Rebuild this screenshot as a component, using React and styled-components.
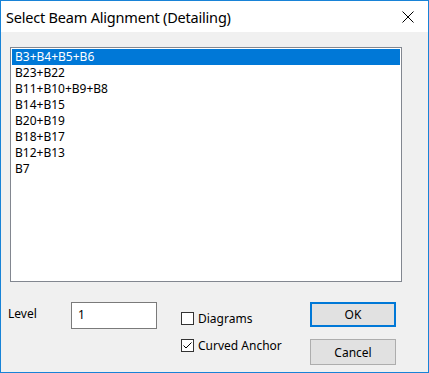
import React from "react";
import styled, {createGlobalStyle} from 'styled-components';

const GlobalStyle = createGlobalStyle`
    html, body {
        margin: 0;
        padding: 0;
        background: #ffffff;
    }
    body {
        font-family: "Segoe UI", "Noto Sans", "Liberation Sans", sans-serif;
    }
`;

const Window = styled.div`
    width: 429px;
    height: 373px;
    box-sizing: border-box;
    border: 1px solid #1883d7;
    background-color: #f0f0f0;
    display: flex;
    flex-direction: column;
`;

const TitleBar = styled.div`
    height: 31px;
    background-color: #ffffff;
    display: flex;
    align-items: center;
    justify-content: space-between;
    padding-left: 5px;
    padding-right: 14px;
`;

const Title = styled.span`
    font-size: 14.5px;
    color: #000000;
    letter-spacing: -0.2px;
`;

const CloseBtn = styled.svg`
    width: 12px;
    height: 12px;
    margin-top: 1px;
`;

const Body = styled.div`
    padding: 15px 0 0 9px;
    display: flex;
    flex-direction: column;
`;

const ListBox = styled.ul`
    list-style: none;
    margin: 0;
    padding: 1px;
    width: 392px;
    height: 235px;
    box-sizing: border-box;
    border: 1px solid #828790;
    background-color: #ffffff;
`;

const ListItem = styled.li`
    height: 16px;
    line-height: 16px;
    padding-left: 3px;
    font-size: 12px;
    color: ${props => props.selected ? '#ffffff' : '#000000'};
    background-color: ${props => props.selected ? '#0078d7' : 'transparent'};
`;

const BottomRow = styled.div`
    display: flex;
    align-items: flex-start;
    padding-top: 20px;
`;

const Label = styled.span`
    width: 63px;
    margin-left: -2px;
    padding-top: 3px;
    font-size: 12px;
    color: #000000;
`;

const TextBox = styled.div`
    width: 86px;
    height: 27px;
    box-sizing: border-box;
    border: 1px solid #7a7a7a;
    background-color: #ffffff;
    padding: 3px 0 0 6px;
    font-size: 12px;
    color: #000000;
`;

const CheckColumn = styled.div`
    display: flex;
    flex-direction: column;
    gap: 11px;
    margin-left: 24px;
    margin-top: 8px;
    width: 129px;
`;

const CheckRow = styled.label`
    display: flex;
    align-items: center;
    gap: 4px;
    font-size: 12px;
    color: #000000;
    height: 16px;
`;

const Box = styled.span`
    width: 13px;
    height: 13px;
    box-sizing: border-box;
    border: 1px solid #333333;
    background-color: #ffffff;
    display: flex;
    align-items: center;
    justify-content: center;
`;

const ButtonColumn = styled.div`
    display: flex;
    flex-direction: column;
    gap: 12px;
`;

const Button = styled.div`
    width: 86px;
    height: ${props => props.primary ? '25px' : '26px'};
    box-sizing: border-box;
    border: ${props => props.primary ? '2px solid #0078d7' : '1px solid #adadad'};
    background-color: #e1e1e1;
    display: flex;
    align-items: center;
    justify-content: center;
    font-size: 12px;
    color: #000000;
`;

const items = ['B3+B4+B5+B6', 'B23+B22', 'B11+B10+B9+B8', 'B14+B15', 'B20+B19', 'B18+B17', 'B12+B13', 'B7'];

function CheckBox(props) {
    return (
        <CheckRow>
            <Box>
                {props.checked &&
                    <svg width="11" height="11" viewBox="0 0 11 11">
                        <polyline points="1.5,5.5 4,8 9.5,2.5" fill="none" stroke="#000" strokeWidth="1"/>
                    </svg>}
            </Box>
            {props.text}
        </CheckRow>
    );
}

export default function App() {
    return (
        <Window>
            <GlobalStyle/>
            <TitleBar>
                <Title>Select Beam Alignment (Detailing)</Title>
                <CloseBtn viewBox="0 0 12 12">
                    <path d="M0.5 0.5 L11.5 11.5 M11.5 0.5 L0.5 11.5" stroke="#000" strokeWidth="1" fill="none"/>
                </CloseBtn>
            </TitleBar>
            <Body>
                <ListBox>
                    {items.map((item, index) =>
                        <ListItem key={item} selected={index === 0}>{item}</ListItem>
                    )}
                </ListBox>
                <BottomRow>
                    <Label>Level</Label>
                    <TextBox>1</TextBox>
                    <CheckColumn>
                        <CheckBox text="Diagrams"/>
                        <CheckBox text="Curved Anchor" checked/>
                    </CheckColumn>
                    <ButtonColumn>
                        <Button primary>OK</Button>
                        <Button>Cancel</Button>
                    </ButtonColumn>
                </BottomRow>
            </Body>
        </Window>
    );
}
